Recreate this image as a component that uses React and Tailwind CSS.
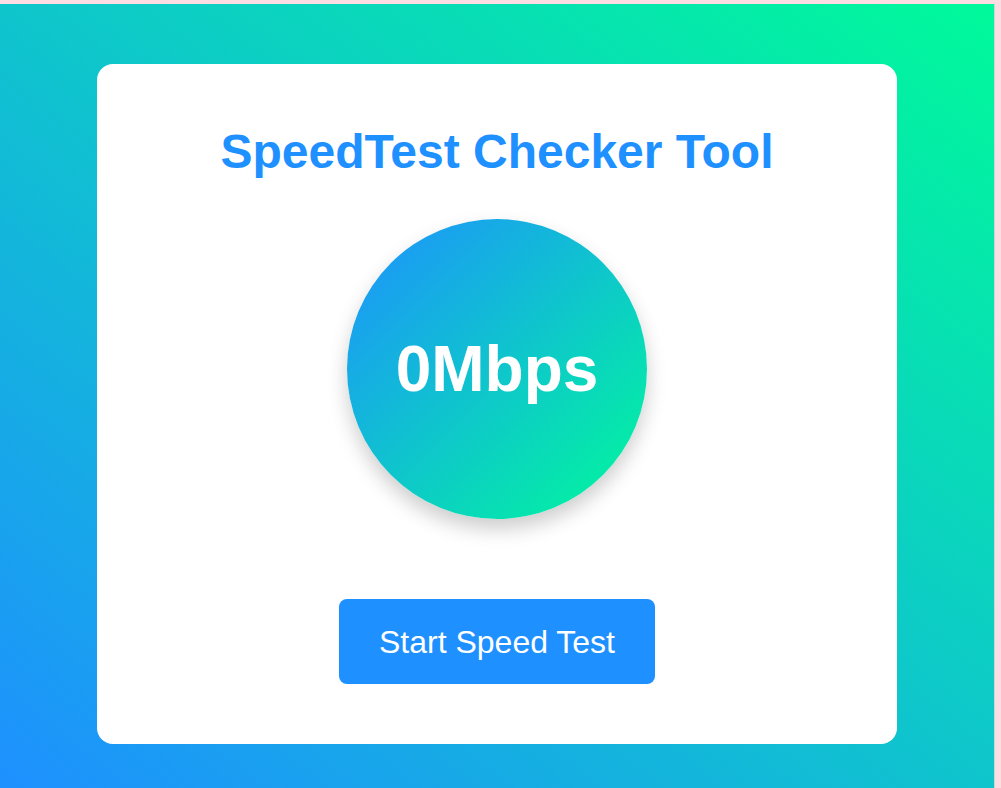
export default function App() {
  return (
    <div className="min-h-[788px] bg-[#fbdde3] pt-[4px] pr-[6px]" style={{ fontFamily: '"Liberation Sans", Arial, sans-serif' }}>
      <div className="flex min-h-[784px] justify-center border-r border-[#c9d6d6] bg-[linear-gradient(to_top_right,#1e90ff,#00fa9a)] pt-[60px]">
        <div className="flex h-[680px] w-[800px] flex-col items-center rounded-[16px] bg-white pt-[64px]">
          <h1 className="text-[48px] leading-[48px] font-bold text-[#1e90ff]">SpeedTest Checker Tool</h1>
          <div className="mt-[43px] flex h-[300px] w-[300px] items-center justify-center rounded-full bg-[linear-gradient(to_bottom_right,#1e90ff,#00fa9a)] shadow-[0_10px_20px_rgba(0,0,0,0.2)]">
            <span className="text-[64px] leading-none font-bold text-white">0Mbps</span>
          </div>
          <button className="mt-[80px] h-[85px] w-[316px] rounded-[8px] bg-[#1e90ff] text-[32px] text-white">
            Start Speed Test
          </button>
        </div>
      </div>
    </div>
  );
}
